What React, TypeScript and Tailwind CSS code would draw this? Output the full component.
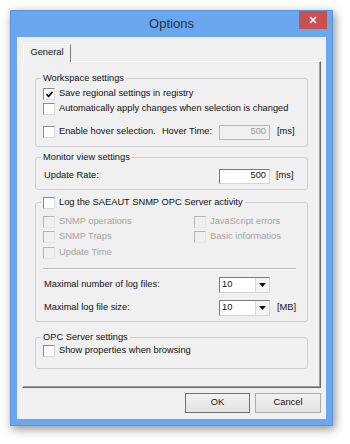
import { ReactNode } from "react";

const font = { fontFamily: '"Liberation Sans", Arial, sans-serif' };

const Check = ({ checked = false, disabled = false }: { checked?: boolean; disabled?: boolean }) => (
  <span
    className={
      "flex h-[12px] w-[12px] shrink-0 items-center justify-center border " +
      (disabled
        ? "border-t-[#b4b4b4] border-l-[#b4b4b4] border-r-[#e4e4e4] border-b-[#e4e4e4] bg-[#f0f0f0]"
        : "border-t-[#8a8a8a] border-l-[#8a8a8a] border-r-[#dcdcdc] border-b-[#dcdcdc] bg-white")
    }
  >
    {checked && (
      <svg width="9" height="9" viewBox="0 0 9 9">
        <path d="M1.5 4.2 L3.6 6.4 L7.6 1.8" fill="none" stroke="#111" strokeWidth="1.7" />
      </svg>
    )}
  </span>
);

const CheckRow = ({ label, checked, disabled }: { label: string; checked?: boolean; disabled?: boolean }) => (
  <div className="flex h-[14px] items-center gap-[4px]">
    <Check checked={checked} disabled={disabled} />
    <span className={disabled ? "text-[#a3a3a3]" : "text-[#111]"}>{label}</span>
  </div>
);

const TextBox = ({ value, disabled }: { value: string; disabled?: boolean }) => (
  <div
    className={
      "flex h-[15px] w-[51px] items-center justify-end border pr-[3px] " +
      (disabled
        ? "border-[#b9b9b9] bg-[#f0f0f0] text-[#9a9a9a]"
        : "border-t-[#7a7a7a] border-l-[#7a7a7a] border-r-[#d4d4d4] border-b-[#d4d4d4] bg-white text-[#111]")
    }
  >
    {value}
  </div>
);

const Combo = ({ value }: { value: string }) => (
  <div className="flex h-[16px] w-[51px] items-stretch border border-t-[#7a7a7a] border-l-[#7a7a7a] border-r-[#d4d4d4] border-b-[#d4d4d4] bg-white">
    <span className="flex flex-1 items-center pl-[2px] text-[#111]">{value}</span>
    <span className="flex w-[14px] items-center justify-center border-l border-[#dadada] bg-[#f4f4f4]">
      <svg width="7" height="4" viewBox="0 0 7 4">
        <path d="M0 0 H7 L3.5 4 Z" fill="#111" />
      </svg>
    </span>
  </div>
);

const Group = ({ legend, className, children }: { legend: ReactNode; className: string; children: ReactNode }) => (
  <fieldset className={"rounded-[3px] border border-[#cdcdcd] px-[7px] " + className}>
    <legend className="ml-[-2px] flex h-[13px] items-center px-[2px] text-[#111]">{legend}</legend>
    {children}
  </fieldset>
);

export default function App() {
  return (
    <div className="h-[444px] w-[350px] overflow-hidden bg-white pl-[10px] pt-[10px] text-[9.3px]" style={font}>
      <div className="flex h-[416px] w-[323px] flex-col border border-[#5b93d4] bg-[#69a8ef] shadow-[2px_3px_9px_rgba(0,0,0,0.45)]">
        {/* title bar */}
        <div className="relative flex h-[26px] items-center justify-center">
          <span className="text-[13px] text-[#2a2f36]">Options</span>
          <div className="absolute right-[5px] top-0 flex h-[18px] w-[28px] items-center justify-center bg-[#c75050]">
            <svg width="8" height="8" viewBox="0 0 8 8">
              <path d="M1 1 L7 7 M7 1 L1 7" stroke="white" strokeWidth="1.6" />
            </svg>
          </div>
        </div>

        {/* client */}
        <div className="mx-[6px] mb-[6px] flex flex-1 flex-col bg-[#f0f0f0] px-[5px] pt-[7px]">
          <div className="relative z-10 mb-[-1px] ml-[1px] flex h-[18px] w-[48px] items-center justify-center border border-b-0 border-t-white border-l-white border-r-[#7c7c7c] bg-[#f0f0f0] pb-[1px] text-[#111]">
            General
          </div>
          <div className="h-[327px] w-[299px] border border-t-white border-l-white border-r-[#696969] border-b-[#696969] px-[12px] shadow-[inset_-1px_-1px_0_#a0a0a0]">
            <Group legend="Workspace settings" className="mt-[10px] pb-[6px]">
              <div className="pt-[2px]">
                <CheckRow label="Save regional settings in registry" checked />
                <div className="mt-[1px]">
                  <CheckRow label="Automatically apply changes when selection is changed" />
                </div>
                <div className="mt-[8px] flex h-[16px] items-center">
                  <div className="flex w-[176px] items-center gap-[4px]">
                    <Check />
                    <span className="text-[#111]">Enable hover selection.</span>
                    <span className="ml-auto pr-[7px] text-[#111]">Hover Time:</span>
                  </div>
                  <TextBox value="500" disabled />
                  <span className="ml-[7px] text-[#111]">[ms]</span>
                </div>
              </div>
            </Group>

            <Group legend="Monitor view settings" className="mt-[4px] pb-[5px]">
              <div className="mt-[4px] flex h-[16px] items-center">
                <span className="w-[176px] pl-[1px] text-[#111]">Update Rate:</span>
                <TextBox value="500" />
                <span className="ml-[6px] text-[#111]">[ms]</span>
              </div>
            </Group>

            <Group
              legend={
                <span className="flex items-center gap-[4px]">
                  <Check />
                  <span>Log the SAEAUT SNMP OPC Server activity</span>
                </span>
              }
              className="mt-[6px] pb-[5px]"
            >
              <div className="grid grid-cols-[151px_1fr] pt-[6px]">
                <div className="h-[15px]"><CheckRow label="SNMP operations" disabled /></div>
                <div className="h-[15px]"><CheckRow label="JavaScript errors" disabled /></div>
                <div className="h-[15px]"><CheckRow label="SNMP Traps" disabled /></div>
                <div className="h-[15px]"><CheckRow label="Basic informatios" disabled /></div>
                <div className="mt-[1px] h-[15px]"><CheckRow label="Update Time" disabled /></div>
              </div>
              <div className="mr-[4px] mt-[7px] h-[2px] border-t border-b border-t-[#b4b4b4] border-b-white" />
              <div className="mt-[7px] flex h-[16px] items-center">
                <span className="w-[176px] pl-[1px] text-[#111]">Maximal number of log files:</span>
                <Combo value="10" />
              </div>
              <div className="mt-[7px] flex h-[16px] items-center">
                <span className="w-[176px] pl-[1px] text-[#111]">Maximal log file size:</span>
                <Combo value="10" />
                <span className="ml-[7px] text-[#111]">[MB]</span>
              </div>
            </Group>

            <Group legend="OPC Server settings" className="mt-[9px] pb-[10px]">
              <CheckRow label="Show properties when browsing" />
            </Group>
          </div>

          <div className="mt-[5px] flex justify-end gap-[5px]">
            <button className="h-[20px] w-[65px] border border-[#707070] bg-gradient-to-b from-[#f2f2f2] to-[#e3e3e3] text-[#111]">
              OK
            </button>
            <button className="h-[20px] w-[66px] border border-[#acacac] bg-gradient-to-b from-[#f2f2f2] to-[#e3e3e3] text-[#111]">
              Cancel
            </button>
          </div>
        </div>
      </div>
    </div>
  );
}
